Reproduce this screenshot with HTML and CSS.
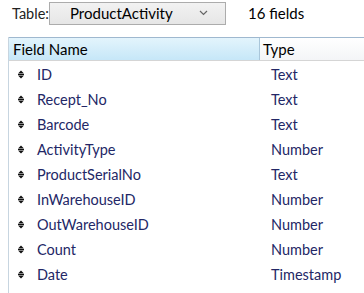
FILE: index.html
```html
<!DOCTYPE html>
<html lang="en">
<head>
    <meta charset="UTF-8">
    <title>Table fields</title>
    <link rel="stylesheet" href="styles.css">
</head>
<body>
    <div class="toolbar">
        <span class="label">Table:</span>
        <div class="select">
            <span>ProductActivity</span>
            <svg class="chevron" width="9" height="6" viewBox="0 0 9 6"><path d="M1 1 L4.5 4.5 L8 1" fill="none" stroke="#666" stroke-width="1.2"/></svg>
        </div>
        <span class="count">16 fields</span>
    </div>

    <div class="grid">
        <div class="head">
            <div class="col-name sorted">Field Name</div>
            <div class="col-type">Type</div>
        </div>
        <div class="rows" id="rows"></div>
    </div>

    <script>
        const fields = [
            ['ID', 'Text'],
            ['Recept_No', 'Text'],
            ['Barcode', 'Text'],
            ['ActivityType', 'Number'],
            ['ProductSerialNo', 'Text'],
            ['InWarehouseID', 'Number'],
            ['OutWarehouseID', 'Number'],
            ['Count', 'Number'],
            ['Date', 'Timestamp']
        ];
        const icon = '<svg class="grip" width="6" height="9" viewBox="0 0 6 9">' +
            '<path d="M0 3.5 L3 0.5 L6 3.5 Z M0 5.5 L3 8.5 L6 5.5 Z" fill="#111"/>' +
            '<rect x="0" y="4" width="6" height="1" fill="#111"/></svg>';
        const rows = document.getElementById('rows');
        fields.forEach(([name, type]) => {
            const row = document.createElement('div');
            row.className = 'row';
            row.innerHTML = `<div class="col-name">${icon}<span>${name}</span></div><div class="col-type">${type}</div>`;
            rows.appendChild(row);
        });
    </script>
</body>
</html>
```

FILE: styles.css
```css
body {
    margin: 0;
    background: #fff;
    font-family: Lato, "Noto Sans", sans-serif;
    font-size: 14.5px;
    color: #000;
    width: 364px;
    height: 293px;
    overflow: hidden;
}

.toolbar {
    display: flex;
    align-items: center;
    height: 26px;
    padding-left: 12px;
}

.label {
    width: 37px;
    color: #222;
}

.select {
    display: flex;
    align-items: center;
    justify-content: space-between;
    box-sizing: border-box;
    width: 177px;
    height: 23px;
    padding: 0 17px 0 20px;
    border: 1px solid #acacac;
    background: linear-gradient(#f2f2f2, #e6e6e6);
    font-size: 15px;
}

.count {
    margin-left: 22px;
    font-size: 15px;
}

.grid {
    margin: 11px 0 0 8px;
    border-left: 1px solid #c7d5e0;
    height: 260px;
}

.head {
    display: flex;
    height: 22px;
    border-top: 1px solid #9fb8cf;
    border-bottom: 1px solid #d5d5d5;
    background: linear-gradient(#ffffff, #f4f5f7);
    font-size: 15px;
}

.head .col-name {
    box-sizing: border-box;
    width: 251px;
    padding: 0 0 1px 4px;
    display: flex;
    align-items: center;
}

.head .sorted {
    background: linear-gradient(#e3f4fc, #c6e7f8);
    border-right: 1px solid #a9c6da;
}

.head .col-type {
    padding: 0 0 1px 3px;
    display: flex;
    align-items: center;
}

.rows {
    padding-top: 1px;
}

.row {
    display: flex;
    height: 25px;
    align-items: center;
    color: #232766;
    font-size: 14.5px;
}

.row .col-name {
    width: 251px;
    display: flex;
    align-items: center;
    padding-left: 9px;
    box-sizing: border-box;
}

.grip {
    margin-right: 13px;
}

.row .col-type {
    padding-left: 11px;
}
```
